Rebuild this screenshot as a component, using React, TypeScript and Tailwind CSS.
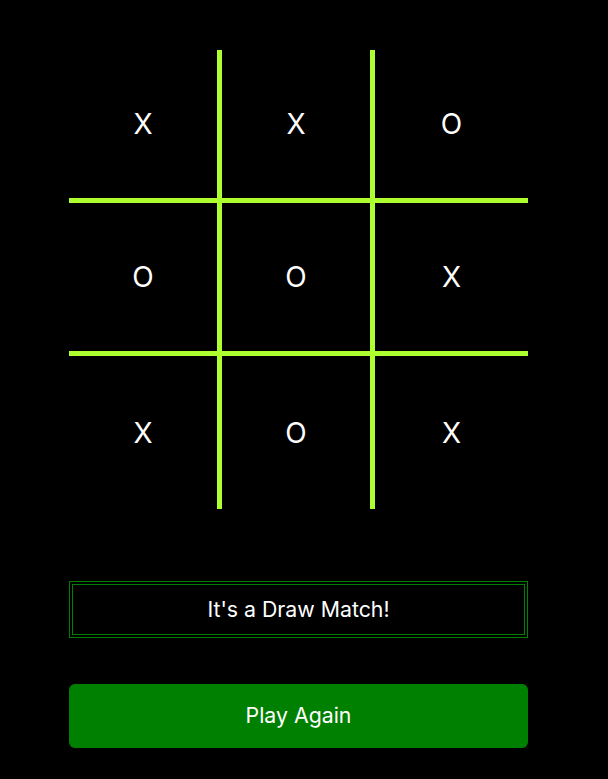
const board = ["X", "X", "O", "O", "O", "X", "X", "O", "X"];

function Cell({ value, index }: { value: string; index: number }) {
  const col = index % 3;
  const row = Math.floor(index / 3);
  return (
    <div
      className={`flex h-[153px] items-center justify-center text-[28px] text-white ${
        col < 2 ? "border-r-[5px] border-r-[#adff2f]" : ""
      } ${row < 2 ? "border-b-[5px] border-b-[#adff2f]" : ""}`}
    >
      {value}
    </div>
  );
}

export default function App() {
  return (
    <div className="min-h-[779px] bg-black pt-[50px] font-['Inter','Liberation_Sans',sans-serif]">
      <div className="ml-[69px] w-[459px]">
        <div className="grid grid-cols-3">
          {board.map((v, i) => (
            <Cell key={i} value={v} index={i} />
          ))}
        </div>
        <div className="mt-[72px] flex h-[57px] items-center justify-center border-4 border-double border-[#008000] text-[21.3px] text-white">
          It's a Draw Match!
        </div>
        <button className="mt-[46px] flex h-16 w-full items-center justify-center rounded-md bg-[#008000] text-[21.3px] text-white">
          Play Again
        </button>
      </div>
    </div>
  );
}
